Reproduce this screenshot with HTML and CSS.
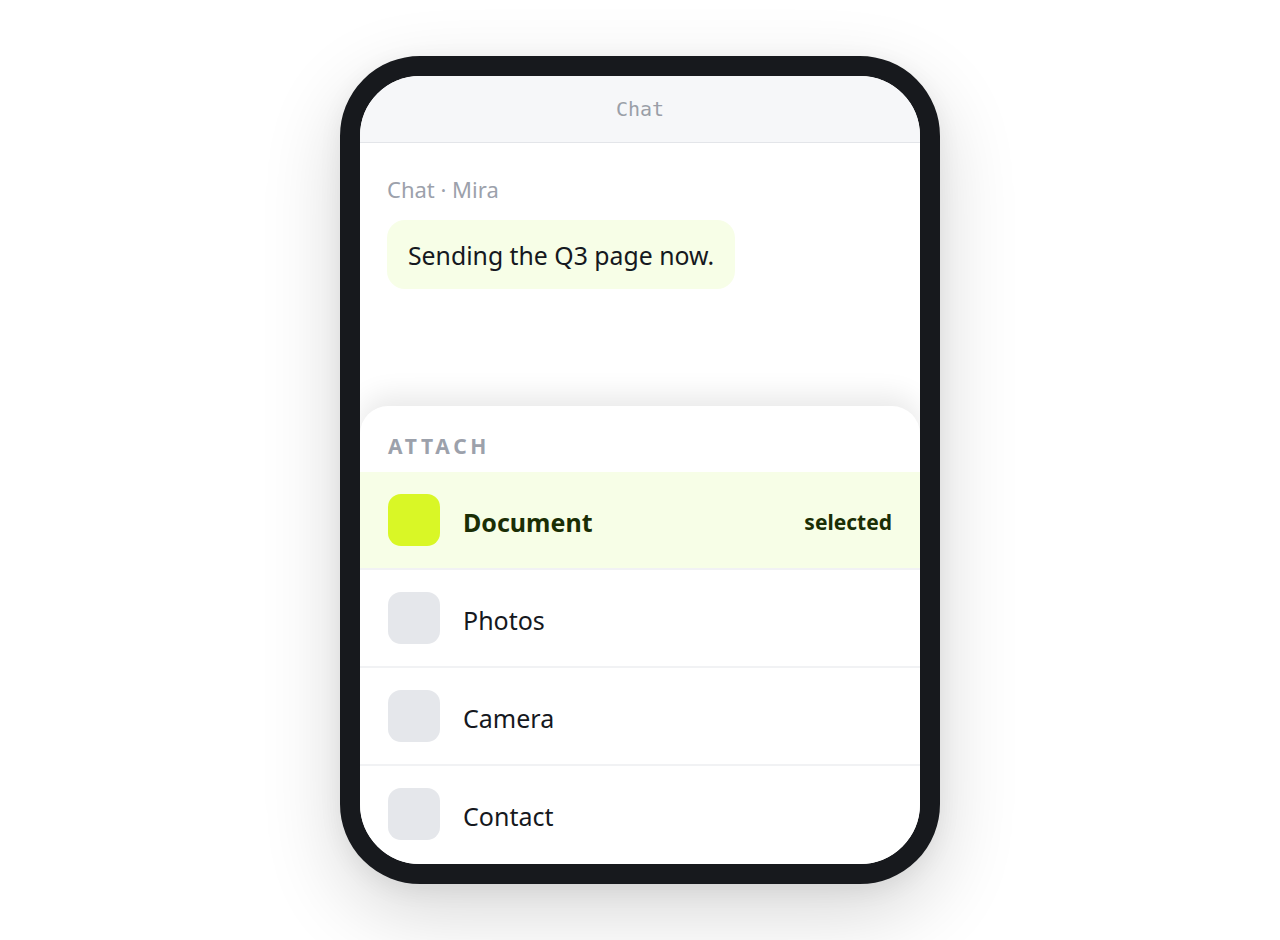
FILE: index.html
```html
<!DOCTYPE html>
<html lang="en">
<head>
<meta charset="utf-8">
<title>Chat</title>
<link rel="stylesheet" href="styles.css">
</head>
<body>
<div class="phone">
  <div class="screen">
    <header class="topbar">Chat</header>
    <main class="chat">
      <div class="meta">Chat · Mira</div>
      <div class="bubble">Sending the Q3 page now.</div>
    </main>
    <section class="sheet">
      <div class="sheet-title">ATTACH</div>
      <ul class="options">
        <li class="option is-selected"><span class="ico"></span><span class="label">Document</span><span class="tag">selected</span></li>
        <li class="option"><span class="ico"></span><span class="label">Photos</span></li>
        <li class="option"><span class="ico"></span><span class="label">Camera</span></li>
        <li class="option"><span class="ico"></span><span class="label">Contact</span></li>
      </ul>
    </section>
  </div>
</div>
</body>
</html>
```

FILE: styles.css
```css
* { box-sizing: border-box; }
html, body { margin: 0; padding: 0; }
body {
  background: #ffffff;
  font-family: "Noto Sans", "Open Sans", sans-serif;
  color: #151820;
  display: flex;
  justify-content: center;
  padding-top: 56px;
  height: 940px;
  overflow: hidden;
}
.phone {
  width: 600px;
  height: 828px;
  border: 20px solid #17191d;
  border-radius: 80px;
  background: #fff;
  overflow: hidden;
  box-shadow: 0 28px 80px rgba(0, 0, 0, 0.16), 0 6px 24px rgba(0, 0, 0, 0.06);
}
.screen {
  height: 100%;
  display: flex;
  flex-direction: column;
}
.topbar {
  height: 67px;
  flex: 0 0 67px;
  background: #f6f7f9;
  border-bottom: 1px solid #e3e5e9;
  display: flex;
  align-items: center;
  justify-content: center;
  font-family: "DejaVu Sans Mono", "Liberation Mono", monospace;
  font-size: 20px;
  color: #9a9fa8;
  padding-bottom: 1px;
}
.chat {
  flex: 1;
  padding: 31px 26px 0 27px;
}
.meta {
  font-size: 22px;
  line-height: 30px;
  color: #9ca1ab;
}
.bubble {
  display: inline-block;
  margin-top: 16px;
  background: #f7fee7;
  border-radius: 18px;
  padding: 20px 21px 18px;
  font-size: 24.8px;
  line-height: 31px;
  color: #151820;
}
.sheet {
  flex: 0 0 458px;
  background: #fff;
  border-radius: 28px 28px 0 0;
  box-shadow: 0 -10px 28px rgba(0, 0, 0, 0.09);
  position: relative;
}
.sheet-title {
  padding: 27px 28px 13px;
  font-size: 21px;
  line-height: 26px;
  font-weight: 700;
  letter-spacing: 3.7px;
  color: #9ca1ab;
}
.options {
  list-style: none;
  margin: 0;
  padding: 0;
}
.option {
  height: 98px;
  padding: 0 28px;
  border-bottom: 2px solid #f1f2f4;
  display: flex;
  align-items: center;
  gap: 23px;
  font-size: 25px;
  color: #151820;
}
.option:last-child { border-bottom: none; height: 96px; }
.ico {
  width: 52px;
  height: 52px;
  flex: 0 0 52px;
  border-radius: 13px;
  background: #e5e7eb;
}
.label { flex: 1; padding-top: 4px; }
.is-selected {
  background: #f7fee7;
  color: #1a2e05;
}
.is-selected .ico { background: #d9f726; }
.is-selected .label { font-weight: 700; }
.tag {
  font-size: 21px;
  font-weight: 700;
  color: #1a2e05;
  padding-top: 4px;
}
```
